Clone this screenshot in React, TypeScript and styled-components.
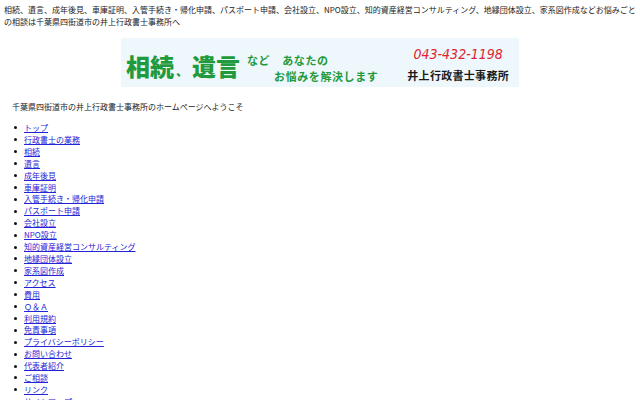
import React from 'react';
import { createGlobalStyle, styled } from 'styled-components';

const GlobalStyle = createGlobalStyle`
  body {
    margin: 4px;
    background: #ffffff;
    color: #222222;
    font-family: 'Noto Sans CJK JP', 'Noto Sans', sans-serif;
    font-size: 8px;
    line-height: 12px;
  }
`;

const menu = [
  'トップ',
  '行政書士の業務',
  '相続',
  '遺言',
  '成年後見',
  '車庫証明',
  '入管手続き・帰化申請',
  'パスポート申請',
  '会社設立',
  'NPO設立',
  '知的資産経営コンサルティング',
  '地縁団体設立',
  '家系図作成',
  'アクセス',
  '費用',
  'Ｑ＆Ａ',
  '利用規約',
  '免責事項',
  'プライバシーポリシー',
  'お問い合わせ',
  '代表者紹介',
  'ご相談',
  'リンク',
  'サイトマップ',
];

const Intro = styled.p`
  margin: 0;
`;

const BannerRow = styled.div`
  display: flex;
  justify-content: center;
  margin-top: 10px;
`;

const Banner = styled.div`
  width: 398px;
  height: 49px;
  box-sizing: border-box;
  padding: 0 10px 0 5px;
  display: flex;
  align-items: center;
  background: #eef7fb;
`;

const Title = styled.div`
  display: flex;
  align-items: flex-end;
  margin-top: 6px;
  color: #1f9a3c;
  font-size: 24px;
  line-height: 28px;
  font-weight: 900;
`;

const Comma = styled.span`
  font-size: 12px;
  line-height: 18px;
  padding: 0 4px 0 2px;
`;

const Tagline = styled.div`
  display: flex;
  flex-direction: column;
  margin: 10px 0 0 7px;
  color: #1f9a3c;
  font-size: 11px;
  line-height: 16px;
  font-weight: 700;
  letter-spacing: 0.6px;
`;

const TagLine = styled.div<{ $indent?: number }>`
  display: flex;
  gap: 12px;
  padding-left: ${(p) => p.$indent ?? 0}px;
  white-space: nowrap;
`;

const Contact = styled.div`
  margin: 3px 0 0 auto;
  display: flex;
  flex-direction: column;
  align-items: center;
`;

const Phone = styled.div`
  color: #e0232e;
  font-family: 'DejaVu Sans Condensed', 'DejaVu Sans', sans-serif;
  font-style: italic;
  font-size: 14px;
  line-height: 18px;
`;

const Office = styled.div`
  margin-top: 3px;
  color: #1a1a1a;
  font-size: 11px;
  line-height: 18px;
  font-weight: 700;
  letter-spacing: 0.3px;
`;

const Welcome = styled.p`
  margin: 14px 0 0 8px;
`;

const Menu = styled.ul`
  margin: 9px 0 0;
  padding-left: 10px;
  list-style: none;
`;

const MenuItem = styled.li`
  display: flex;
  align-items: center;
  line-height: 11.9px;

  &::before {
    content: '';
    width: 3px;
    height: 3px;
    margin-right: 7px;
    border-radius: 50%;
    background: #111111;
    flex: none;
  }
`;

const MenuLink = styled.a`
  color: #2424d6;
  text-decoration: underline;
`;

export default function App() {
  return (
    <>
      <GlobalStyle />
      <Intro>
        相続、遺言、成年後見、車庫証明、入管手続き・帰化申請、パスポート申請、会社設立、NPO設立、知的資産経営コンサルティング、地縁団体設立、家系図作成などお悩みごとの相談は千葉県四街道市の井上行政書士事務所へ
      </Intro>
      <BannerRow>
        <Banner>
          <Title>
            相続<Comma>、</Comma>遺言
          </Title>
          <Tagline>
            <TagLine>
              <span>など</span>
              <span>あなたの</span>
            </TagLine>
            <TagLine $indent={27}>お悩みを解決します</TagLine>
          </Tagline>
          <Contact>
            <Phone>043-432-1198</Phone>
            <Office>井上行政書士事務所</Office>
          </Contact>
        </Banner>
      </BannerRow>
      <Welcome>千葉県四街道市の井上行政書士事務所のホームページへようこそ</Welcome>
      <Menu>
        {menu.map((label) => (
          <MenuItem key={label}>
            <MenuLink href="#">{label}</MenuLink>
          </MenuItem>
        ))}
      </Menu>
    </>
  );
}
